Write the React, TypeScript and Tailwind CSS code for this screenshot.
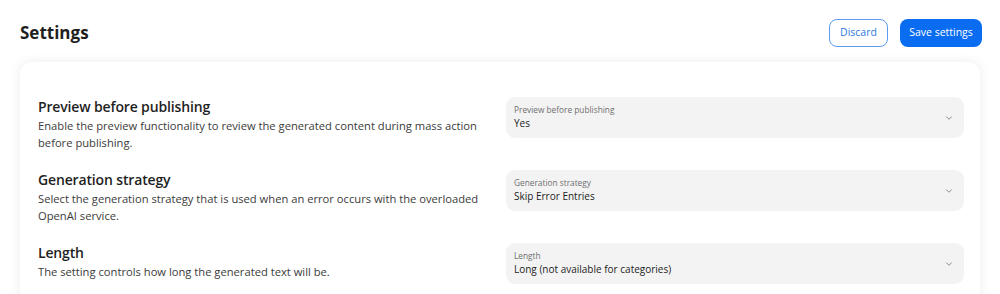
import { ChevronDown } from "lucide-react";

const rows = [
  {
    title: "Preview before publishing",
    desc: "Enable the preview functionality to review the generated content during mass action before publishing.",
    label: "Preview before publishing",
    value: "Yes",
  },
  {
    title: "Generation strategy",
    desc: "Select the generation strategy that is used when an error occurs with the overloaded OpenAI service.",
    label: "Generation strategy",
    value: "Skip Error Entries",
  },
  {
    title: "Length",
    desc: "The setting controls how long the generated text will be.",
    label: "Length",
    value: "Long (not available for categories)",
  },
];

const SettingRow = ({ title, desc, label, value }: (typeof rows)[number]) => {
  return (
    <div className="flex items-start justify-between">
      <div className="w-[455px] min-h-[54px]">
        <h4 className="text-[14px] leading-[20px] font-semibold tracking-[-0.15px] text-[#1f1f1f]">{title}</h4>
        <p className="text-[11.2px] leading-[17px] text-[#3b3b3b]">{desc}</p>
      </div>
      <button className="w-[458px] h-[41px] bg-[#f3f3f3] rounded-[9px] flex items-center justify-between pl-[8px] pr-[10px] text-left">
        <span className="flex flex-col">
          <span className="text-[8.3px] leading-[12px] text-[#6f6f6f]">{label}</span>
          <span className="text-[10px] leading-[15px] text-[#1c1c1c]">{value}</span>
        </span>
        <ChevronDown className="w-[10px] h-[10px] text-[#777]" strokeWidth={2} />
      </button>
    </div>
  );
};

export default function App() {
  return (
    <div className="min-h-screen bg-white px-[20px] pt-[19px] font-['Open_Sans',sans-serif]">
      <div className="flex items-center justify-between mr-[-2px]">
        <h3 className="text-[17px] font-bold text-[#1f1f1f]">Settings</h3>
        <div className="flex gap-[12px]">
          <button className="h-[28px] w-[59px] rounded-[8px] border border-[#5b9cf2] text-[10.5px] font-medium text-[#2f79e0]">
            Discard
          </button>
          <button className="h-[28px] w-[82px] rounded-[8px] bg-[#0a6cf0] text-[10.5px] font-medium text-white">
            Save settings
          </button>
        </div>
      </div>
      <div className="mt-[15px] bg-white rounded-[12px] shadow-[0_0_12px_rgba(0,0,0,0.08)] pl-[18px] pr-[16px] pt-[35px] pb-[30px]">
        <div className="flex flex-col gap-[19px]">
          {rows.map((r) => (
            <SettingRow key={r.title} {...r} />
          ))}
        </div>
      </div>
    </div>
  );
}
